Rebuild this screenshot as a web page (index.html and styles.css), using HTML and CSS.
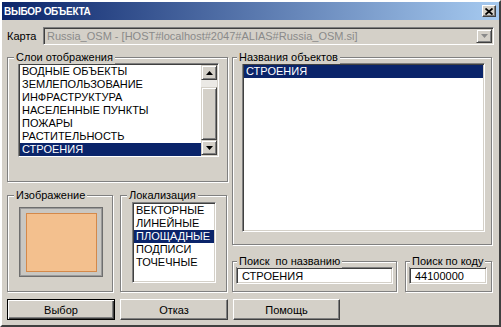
FILE: index.html
```html
<!DOCTYPE html>
<html lang="ru">

<head>
  <meta charset="UTF-8">
  <title>Выбор объекта</title>
  <link rel="stylesheet" href="styles.css">
</head>

<body>
  <div class="window">
    <div class="titlebar">
      <span class="title">ВЫБОР ОБЪЕКТА</span>
      <span class="close">
        <svg width="8" height="7" viewBox="0 0 8 7"><path d="M0.5 0.5 L7.5 6.5 M7.5 0.5 L0.5 6.5" stroke="#000" stroke-width="1.8"/></svg>
      </span>
    </div>
    <div class="content">
      <div class="map-row">
        <span class="map-label">Карта</span>
        <div class="combo">
          <span class="combo-text">Russia_OSM - [HOST#localhost#2047#ALIAS#Russia_OSM.si]</span>
          <span class="combo-btn">
            <svg width="7" height="4" viewBox="0 0 7 4"><path d="M0 0 H7 L3.5 4 Z" fill="#8a8a8a"/></svg>
          </span>
        </div>
      </div>

      <div class="main">
        <div class="col-left">
          <div class="group layers">
            <span class="caption">Слои отображения</span>
            <div class="listbox layers-list">
              <ul class="items">
                <li>ВОДНЫЕ ОБЪЕКТЫ</li>
                <li>ЗЕМЛЕПОЛЬЗОВАНИЕ</li>
                <li>ИНФРАСТРУКТУРА</li>
                <li>НАСЕЛЕННЫЕ ПУНКТЫ</li>
                <li>ПОЖАРЫ</li>
                <li>РАСТИТЕЛЬНОСТЬ</li>
                <li class="selected">СТРОЕНИЯ</li>
              </ul>
              <div class="scrollbar">
                <span class="sb-btn">
                  <svg width="7" height="4" viewBox="0 0 7 4"><path d="M0 4 H7 L3.5 0 Z" fill="#000"/></svg>
                </span>
                <div class="sb-track"><div class="sb-thumb"></div></div>
                <span class="sb-btn">
                  <svg width="7" height="4" viewBox="0 0 7 4"><path d="M0 0 H7 L3.5 4 Z" fill="#000"/></svg>
                </span>
              </div>
            </div>
          </div>

          <div class="bottom-row">
            <div class="group image-group">
              <span class="caption">Изображение</span>
              <div class="preview"><div class="swatch"></div></div>
            </div>
            <div class="group loc-group">
              <span class="caption">Локализация</span>
              <ul class="listbox items loc-list">
                <li>ВЕКТОРНЫЕ</li>
                <li>ЛИНЕЙНЫЕ</li>
                <li class="selected">ПЛОЩАДНЫЕ</li>
                <li>ПОДПИСИ</li>
                <li>ТОЧЕЧНЫЕ</li>
              </ul>
            </div>
          </div>
        </div>

        <div class="col-right">
          <div class="group names">
            <span class="caption">Названия объектов</span>
            <ul class="listbox items names-list">
              <li class="selected">СТРОЕНИЯ</li>
            </ul>
          </div>

          <div class="search-row">
            <div class="group search-name">
              <span class="caption">Поиск&nbsp; по названию</span>
              <input class="field name-field" type="text" value="СТРОЕНИЯ">
            </div>
            <div class="group search-code">
              <span class="caption">Поиск по коду</span>
              <input class="field code-field" type="text" value="44100000">
            </div>
          </div>
        </div>
      </div>

      <div class="buttons">
        <button class="button default">Выбор</button>
        <button class="button">Отказ</button>
        <button class="button help">Помощь</button>
      </div>
    </div>
  </div>
</body>

</html>
```

FILE: styles.css
```css
html,
body {
  margin: 0;
  padding: 0;
  background-color: #d4d0c8;
  color: #000;
  font-family: "Liberation Sans", Arial, sans-serif;
  font-size: 11px;
}

* {
  box-sizing: border-box;
}

.window {
  width: 501px;
  height: 327px;
  border: 2px solid;
  border-color: #fff #404040 #404040 #fff;
  background-color: #d4d0c8;
}

/* title bar */

.titlebar {
  height: 18px;
  display: flex;
  align-items: center;
  justify-content: space-between;
  background: linear-gradient(to right, #0a246a, #a6caf0);
  color: #fff;
}

.title {
  padding-left: 2px;
  font-size: 10px;
  font-weight: bold;
  letter-spacing: -0.3px;
}

.close {
  width: 14px;
  height: 12px;
  margin-right: 3px;
  display: flex;
  align-items: center;
  justify-content: center;
  background-color: #d4d0c8;
  border: 1px solid;
  border-color: #fff #404040 #404040 #fff;
  box-shadow: inset -1px -1px 0 #808080;
}

.content {
  padding: 0 5px;
}

/* map combo */

.map-row {
  display: flex;
  align-items: center;
  height: 18px;
  margin-top: 7px;
}

.map-label {
  width: 36px;
}

.combo {
  width: 451px;
  height: 18px;
  display: flex;
  align-items: center;
  padding: 1px;
  border: 1px solid;
  border-color: #808080 #fff #fff #808080;
  box-shadow: inset 1px 1px 0 #404040, inset -1px -1px 0 #d4d0c8;
}

.combo-text {
  flex: 1;
  padding-left: 2px;
  color: #8a8a8a;
  font-size: 11px;
  white-space: nowrap;
  overflow: hidden;
}

.combo-btn,
.sb-btn {
  width: 16px;
  height: 14px;
  display: flex;
  align-items: center;
  justify-content: center;
  background-color: #d4d0c8;
  border: 1px solid;
  border-color: #d4d0c8 #404040 #404040 #d4d0c8;
  box-shadow: inset 1px 1px 0 #fff, inset -1px -1px 0 #808080;
}

/* layout */

.main {
  display: flex;
  gap: 4px;
  margin-top: 12px;
}

.col-left {
  width: 221px;
}

.col-right {
  width: 260px;
}

.bottom-row {
  display: flex;
  gap: 7px;
  margin-top: 13px;
}

.search-row {
  display: flex;
  gap: 8px;
  margin-top: 16px;
}

/* group boxes */

.group {
  position: relative;
  border: 1px solid #808080;
  box-shadow: inset 1px 1px 0 #fff, 1px 1px 0 #fff;
}

.caption {
  position: absolute;
  top: -7px;
  left: 6px;
  padding: 0 2px;
  line-height: 13px;
  background-color: #d4d0c8;
  white-space: nowrap;
}

.layers {
  height: 125px;
  padding: 5px 0 0 10px;
}

.image-group {
  width: 106px;
  height: 97px;
  padding: 11px 0 0 11px;
}

.loc-group {
  width: 107px;
  height: 97px;
  padding: 6px 0 0 11px;
}

.names {
  height: 188px;
  padding: 5px 0 0 9px;
}

.names .caption {
  left: 4px;
}

.search-name {
  width: 165px;
  height: 31px;
  padding: 5px 0 0 3px;
}

.search-code {
  width: 87px;
  height: 31px;
  padding: 5px 0 0 3px;
}

.search-name .caption,
.search-code .caption {
  left: 4px;
}

/* list boxes */

.listbox {
  padding: 1px;
  background-color: #fff;
  border: 1px solid;
  border-color: #808080 #fff #fff #808080;
  box-shadow: inset 1px 1px 0 #404040, inset -1px -1px 0 #d4d0c8;
  overflow: hidden;
}

.items {
  list-style: none;
  margin: 0;
}

.items li {
  padding-left: 2px;
  line-height: 13px;
  white-space: nowrap;
}

.items li.selected {
  background-color: #0a246a;
  color: #fff;
}

.layers-list {
  width: 201px;
  height: 94px;
  display: flex;
}

.layers-list .items {
  flex: 1;
  padding: 0;
}

.loc-list {
  width: 84px;
  height: 81px;
}

.names-list {
  width: 243px;
  height: 169px;
}

.scrollbar {
  width: 16px;
  display: flex;
  flex-direction: column;
}

.sb-btn {
  height: 15px;
}

.sb-track {
  flex: 1;
  display: flex;
  flex-direction: column;
  padding-top: 7px;
  background-color: #ebe9e5;
}

.sb-thumb {
  flex: 1;
  background-color: #d4d0c8;
  border: 1px solid;
  border-color: #d4d0c8 #404040 #404040 #d4d0c8;
  box-shadow: inset 1px 1px 0 #fff, inset -1px -1px 0 #808080;
}

/* picture preview */

.preview {
  width: 84px;
  height: 70px;
  padding: 5px 0 0 6px;
  background-color: #c9c7c2;
  border: 1px solid #6e6e6e;
  box-shadow: inset 0 0 0 1px #9a9a9a;
}

.swatch {
  width: 71px;
  height: 59px;
  background-color: #f3c08e;
  border: 1px solid #d4894a;
}

/* inputs */

.field {
  display: block;
  height: 17px;
  padding: 0 0 0 5px;
  background-color: #fff;
  border: 1px solid;
  border-color: #808080 #fff #fff #808080;
  box-shadow: inset 1px 1px 0 #404040, inset -1px -1px 0 #d4d0c8;
  font-family: inherit;
  font-size: 11px;
  color: #000;
  outline: none;
}

.name-field {
  width: 157px;
}

.code-field {
  width: 78px;
}

/* buttons */

.buttons {
  display: flex;
  gap: 5px;
  margin-top: 7px;
}

.button {
  width: 108px;
  height: 21px;
  padding: 0;
  background-color: #d4d0c8;
  border: 1px solid;
  border-color: #fff #404040 #404040 #fff;
  box-shadow: inset -1px -1px 0 #808080;
  font-family: inherit;
  font-size: 11px;
  color: #000;
}

.button.default {
  border-color: #000;
  box-shadow: inset 1px 1px 0 #fff, inset -1px -1px 0 #404040, inset -2px -2px 0 #808080;
}

.button.help {
  width: 107px;
}
```
